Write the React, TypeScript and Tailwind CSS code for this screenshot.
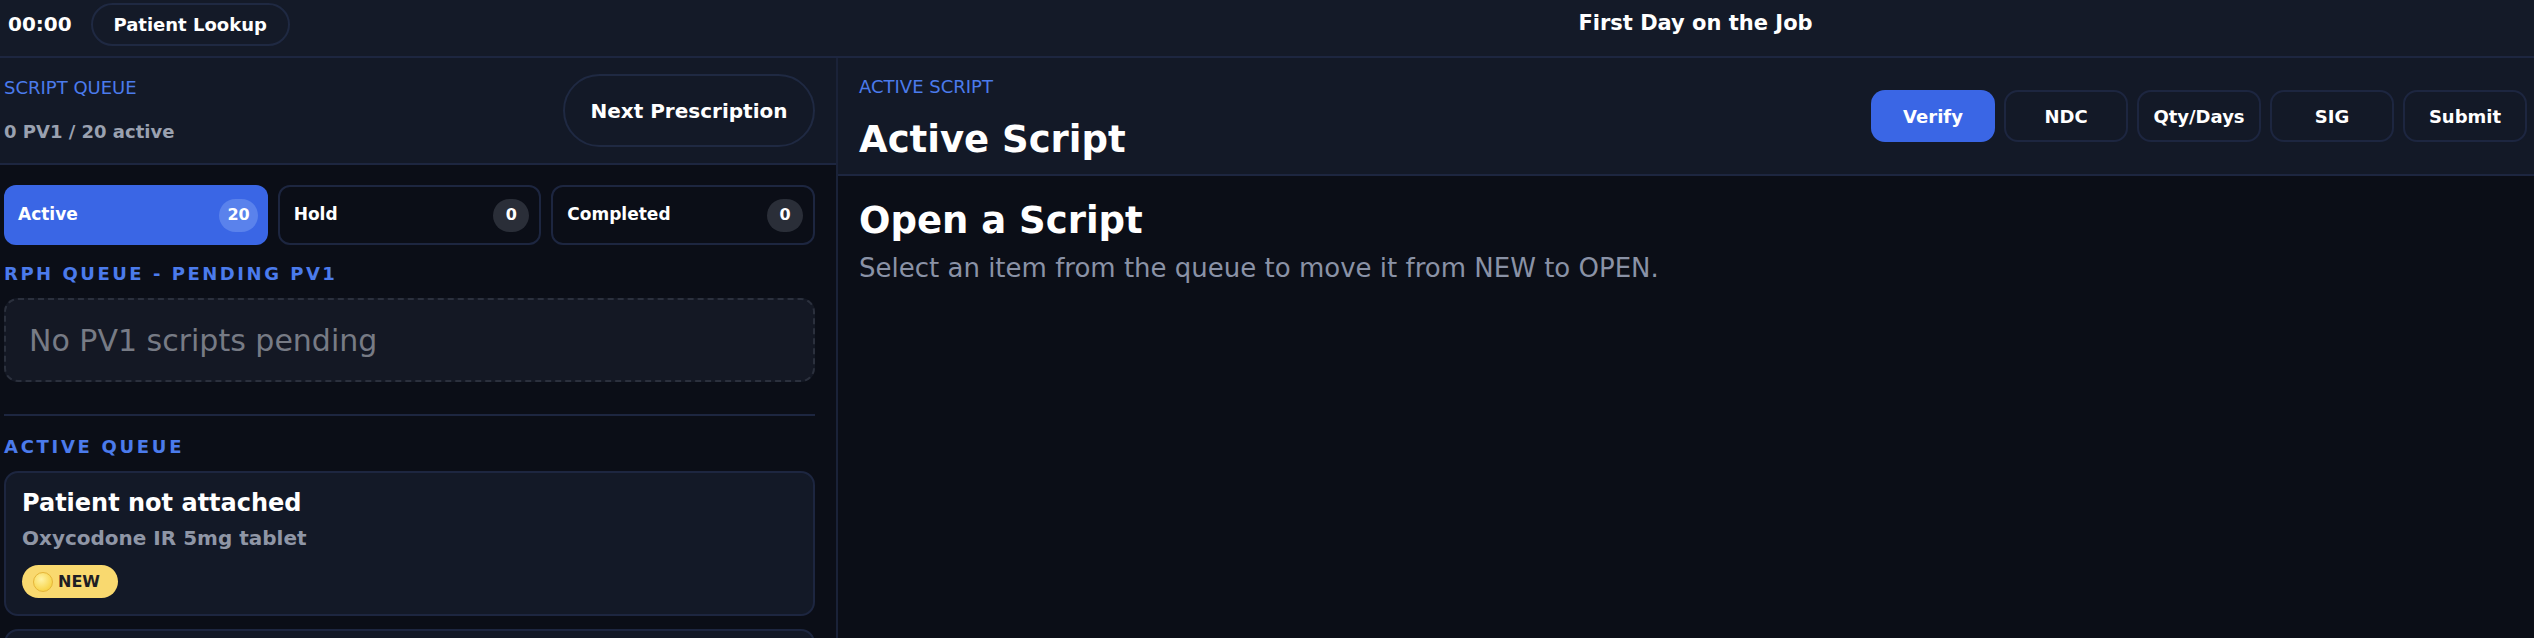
import React from "react";

const tabs = [
  { label: "Active", count: 20, active: true },
  { label: "Hold", count: 0, active: false },
  { label: "Completed", count: 0, active: false },
];

const steps = ["Verify", "NDC", "Qty/Days", "SIG", "Submit"];

export default function App() {
  return (
    <div className="flex h-[638px] w-full flex-col overflow-hidden bg-[#0b0e17] font-['DejaVu_Sans',sans-serif] text-white">
      {/* Top bar */}
      <header className="h-[58px] shrink-0 border-b-2 border-[#1d2640] bg-[#141a28]">
        <div className="flex h-[48px] items-center">
          <div className="flex w-[838px] items-center gap-[19px] pl-2">
            <span className="text-[20px] font-bold">00:00</span>
            <button className="flex h-[43px] w-[199px] items-center justify-center rounded-full border-2 border-[#1f2942] text-[18px] font-bold">
              Patient Lookup
            </button>
          </div>
          <div className="flex-1 pl-[19px] text-center text-[21px] font-bold">First Day on the Job</div>
        </div>
      </header>

      <div className="flex min-h-0 flex-1">
        {/* Left: queue */}
        <aside className="flex w-[838px] shrink-0 flex-col border-r-2 border-[#1a2238]">
          <div className="flex h-[107px] shrink-0 items-center justify-between border-b-2 border-[#1d2640] bg-[#131927] pl-1 pr-[21px]">
            <div className="flex flex-col">
              <span className="text-[18px] leading-[20px] text-[#4b7bec]">SCRIPT QUEUE</span>
              <span className="mt-[23px] text-[18px] font-bold leading-[22px] text-[#9aa1b0]">0 PV1 / 20 active</span>
            </div>
            <button className="flex h-[73px] w-[252px] items-center justify-center rounded-full border-2 border-[#1f2942] text-[20px] font-bold">
              Next Prescription
            </button>
          </div>

          <div className="flex flex-col pl-1 pr-[21px] pt-[20px]">
            <div className="grid h-[60px] grid-cols-3 gap-[10px]">
              {tabs.map((t) => (
                <div
                  key={t.label}
                  className={`flex items-center justify-between rounded-[12px] pl-[14px] pr-[10px] ${t.active ? "bg-[#3a66e5]" : "border-2 border-[#1d2640] bg-[#0b0e17]"}`}
                >
                  <span className="text-[17px] font-bold">{t.label}</span>
                  <span
                    className={`flex h-[33px] min-w-[36px] items-center justify-center rounded-full px-[8px] text-[16px] font-bold ${t.active ? "bg-[#5a82ec]" : "bg-[#2a2e38]"}`}
                  >
                    {t.count}
                  </span>
                </div>
              ))}
            </div>

            <div className="mt-[19px] text-[18px] font-bold leading-[20px] tracking-[0.14em] text-[#4b7bec]">
              RPH QUEUE - PENDING PV1
            </div>
            <div className="mt-[14px] flex h-[84px] items-center rounded-[14px] border-2 border-dashed border-[#2b303d] bg-[#141824] pl-[23px] text-[30px] text-[#777b85]">
              No PV1 scripts pending
            </div>

            <div className="mt-[32px] border-t-2 border-[#1d2640]" />

            <div className="mt-[21px] text-[18px] font-bold leading-[20px] tracking-[0.15em] text-[#4b7bec]">
              ACTIVE QUEUE
            </div>

            <div className="mt-[14px] flex flex-col rounded-[14px] border-2 border-[#1d2640] bg-[#131927] pb-[16px] pl-[16px] pt-[14px]">
              <span className="text-[24px] font-bold leading-[32px]">Patient not attached</span>
              <span className="mt-[6px] text-[20px] font-bold leading-[26px] text-[#8f96a6]">Oxycodone IR 5mg tablet</span>
              <span className="mt-[14px] flex h-[33px] w-[96px] items-center gap-[5px] rounded-full bg-[#f9d96f] pl-[11px] text-[16px] font-bold text-[#1e1e24]">
                <span className="h-[20px] w-[20px] shrink-0 rounded-full border border-[#e5b53a] bg-[radial-gradient(circle_at_40%_35%,#fff3a6,#f5c928)]" />
                NEW
              </span>
            </div>

            <div className="mt-[13px] h-[60px] rounded-[14px] border-2 border-[#1d2640] bg-[#131927]" />
          </div>
        </aside>

        {/* Right: active script */}
        <main className="flex min-w-0 flex-1 flex-col">
          <div className="flex h-[118px] shrink-0 items-center justify-between border-b-2 border-[#1d2640] bg-[#131927] pl-[21px] pr-[7px]">
            <div className="flex flex-col pt-[6px]">
              <span className="text-[18px] leading-[20px] text-[#4b7bec]">ACTIVE SCRIPT</span>
              <span className="mt-[21px] text-[37px] font-bold leading-[44px]">Active Script</span>
            </div>
            <div className="flex gap-[9px]">
              {steps.map((s, i) => (
                <button
                  key={s}
                  className={`flex h-[52px] w-[124px] items-center justify-center rounded-[14px] text-[18px] font-bold ${i === 0 ? "bg-[#3a66e5]" : "border-2 border-[#1d2640]"}`}
                >
                  {s}
                </button>
              ))}
            </div>
          </div>

          <div className="flex flex-col pl-[21px] pt-[23px]">
            <span className="text-[37px] font-bold leading-[44px]">Open a Script</span>
            <span className="mt-[9px] text-[26px] leading-[32px] text-[#8a92a6]">
              Select an item from the queue to move it from NEW to OPEN.
            </span>
          </div>
        </main>
      </div>
    </div>
  );
}
